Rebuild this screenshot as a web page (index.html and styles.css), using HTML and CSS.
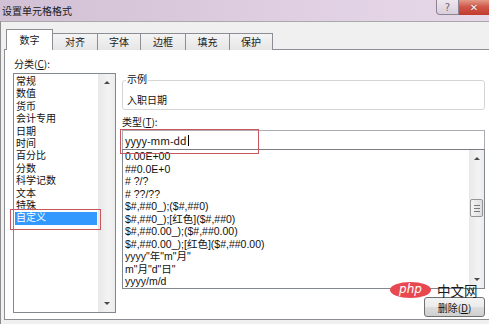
FILE: index.html
```html
<!DOCTYPE html>
<html lang="zh-CN">
<head>
<meta charset="utf-8">
<title>设置单元格格式</title>
<link rel="stylesheet" href="styles.css">
</head>
<body>
<div class="window">
  <div class="titlebar">
    <span class="title">设置单元格格式</span>
    <div class="caption">
      <span class="cap-btn help">?</span>
      <span class="cap-btn close">✕</span>
    </div>
  </div>
  <div class="client">
    <div class="tabs">
      <div class="tab active t1">数字</div>
      <div class="tab t2">对齐</div>
      <div class="tab t3">字体</div>
      <div class="tab t4">边框</div>
      <div class="tab t5">填充</div>
      <div class="tab t6">保护</div>
    </div>
    <div class="panel">
      <div class="left">
        <div class="label">分类(<u>C</u>):</div>
        <div class="listbox cat">
          <ul class="items">
            <li>常规</li>
            <li>数值</li>
            <li>货币</li>
            <li>会计专用</li>
            <li>日期</li>
            <li>时间</li>
            <li>百分比</li>
            <li>分数</li>
            <li>科学记数</li>
            <li>文本</li>
            <li>特殊</li>
            <li class="selected">自定义</li>
          </ul>
          <div class="scroll">
            <div class="arrow"><span class="tri up"></span></div>
            <div class="arrow"><span class="tri down"></span></div>
          </div>
        </div>
      </div>
      <div class="right">
        <fieldset class="sample">
          <legend>示例</legend>
          <div class="sample-text">入职日期</div>
        </fieldset>
        <div class="label type-label">类型(<u>T</u>):</div>
        <div class="input">yyyy-mm-dd<span class="caret"></span></div>
        <div class="listbox types">
          <ul class="items">
            <li>0.00E+00</li>
            <li>##0.0E+0</li>
            <li># ?/?</li>
            <li># ??/??</li>
            <li>$#,##0_);($#,##0)</li>
            <li>$#,##0_);[红色]($#,##0)</li>
            <li>$#,##0.00_);($#,##0.00)</li>
            <li>$#,##0.00_);[红色]($#,##0.00)</li>
            <li>yyyy"年"m"月"</li>
            <li>m"月"d"日"</li>
            <li>yyyy/m/d</li>
          </ul>
          <div class="scroll narrow">
            <div class="arrow"><span class="tri up"></span></div>
            <div class="track"><div class="thumb"><i></i><i></i><i></i></div></div>
            <div class="arrow"><span class="tri down"></span></div>
          </div>
        </div>
        <div class="actions">
          <button class="btn">删除(<u>D</u>)</button>
        </div>
      </div>
    </div>
  </div>
  <div class="mark mark-cat"></div>
  <div class="mark mark-input"></div>
  <div class="watermark"><span class="php">php</span><span class="cn">中文网</span></div>
</div>
</body>
</html>
```

FILE: styles.css
```css
* { box-sizing: border-box; margin: 0; padding: 0; }
html, body { width: 489px; height: 324px; overflow: hidden; }
body {
  font-family: "Noto Sans CJK SC", "Noto Sans", sans-serif;
  font-size: 10px;
  color: #111;
  background: #f0f0f0;
}
u { text-decoration: underline; }

.window { position: relative; width: 489px; height: 324px; display: flex; flex-direction: column; }

.titlebar {
  height: 21px;
  display: flex;
  justify-content: space-between;
  align-items: flex-start;
  background: linear-gradient(to right, #d2c1d5 0%, #d9c8dc 35%, #e0cfe3 60%, #e6d8e8 100%);
}
.title { padding-left: 2px; line-height: 21px; font-size: 10px; color: #1a1a1a; }
.caption { display: flex; }
.cap-btn { height: 15px; display: flex; align-items: center; justify-content: center; }
.help {
  width: 23px;
  border: 1px solid #8e8391;
  border-top: none;
  border-radius: 0 0 0 4px;
  background: linear-gradient(#eee6ef, #d9cfdc);
  color: #6a6a6a;
  font-family: "DejaVu Sans", sans-serif;
  font-size: 10px;
}
.close {
  width: 30px;
  background: linear-gradient(#e39a88 0%, #d0574a 45%, #c13a2e 100%);
  color: #fff;
  font-family: "DejaVu Sans", sans-serif;
  font-size: 10px;
  font-weight: bold;
  text-shadow: 0 0 1px #5a1a14;
}

.client {
  flex: 1;
  border-top: 1px solid #a9a9a9;
  border-left: 1px solid #8d8d8d;
  background: #f0f0f0;
  padding: 7px 0 0 3px;
}

.tabs {
  display: flex;
  align-items: flex-end;
  margin-left: 2px;
  height: 21px;
  margin-bottom: -1px;
  position: relative;
  z-index: 1;
}
.tab {
  height: 17px;
  border: 1px solid #8c8e94;
  border-bottom: none;
  background: linear-gradient(#f4f4f4, #e6e6e6);
  margin-left: -1px;
  text-align: center;
  line-height: 16px;
  color: #1a1a1a;
}
.tab.active {
  height: 21px;
  line-height: 20px;
  background: #fff;
  margin-left: 0;
  position: relative;
  z-index: 2;
}
.t1 { width: 47px; }
.t2 { width: 46px; }
.t3 { width: 44px; }
.t4 { width: 46px; }
.t5 { width: 45px; }
.t6 { width: 44px; }

.panel {
  height: 271px;
  border: 1px solid #8c8e94;
  border-right: none;
  background: #fff;
  display: flex;
  padding: 7px 0 0 8px;
}

.label { line-height: 13px; padding-left: 1px; }

.left { width: 103px; display: flex; flex-direction: column; }
.listbox {
  border: 1px solid #828790;
  background: #fff;
  display: flex;
}
.listbox.cat { margin-top: 3px; height: 240px; }
.items { list-style: none; flex: 1; font-family: "Liberation Sans", "Noto Sans CJK SC", sans-serif; }
.cat .items { padding-top: 2px; }
.cat .items li { line-height: 12.4px; height: 12.4px; margin-left: 1px; padding-left: 1px; margin-right: 1px; white-space: nowrap; }
.cat .items li.selected { background: #3399ff; color: #fff; }

.scroll {
  width: 17px;
  background: linear-gradient(to right, #e8e8e8, #f3f3f3 60%, #ececec);
  display: flex;
  flex-direction: column;
  justify-content: space-between;
}
.scroll.narrow { width: 15px; }
.arrow { height: 17px; display: flex; align-items: center; justify-content: center; }
.tri { width: 0; height: 0; border-left: 3px solid transparent; border-right: 3px solid transparent; }
.tri.up { border-bottom: 3px solid #4a4a4a; }
.tri.down { border-top: 3px solid #4a4a4a; }
.track { flex: 1; display: flex; flex-direction: column; align-items: center; }
.thumb {
  margin-top: 32px;
  width: 13px;
  height: 18px;
  border: 1px solid #959595;
  border-radius: 2px;
  background: linear-gradient(to right, #f4f4f4, #dedede);
  display: flex;
  flex-direction: column;
  align-items: center;
  justify-content: center;
  gap: 2px;
}
.thumb i { display: block; width: 6px; height: 1px; background: #7a7a7a; }

.right { width: 363px; margin-left: 6px; display: flex; flex-direction: column; }

.sample {
  margin-top: 15px;
  border: 1px solid #d5d5d5;
  border-radius: 3px;
  padding: 4px 3px 3px;
}
.sample legend { padding: 0 1px 4px; line-height: 13px; }
.sample-text { line-height: 13px; padding-left: 1px; }

.type-label { margin-top: 5px; padding-left: 0; }
.input {
  margin-top: 2px;
  height: 19px;
  border: 1px solid #abadb3;
  border-bottom: none;
  padding-left: 2px;
  line-height: 17px;
  font-size: 10.5px;
  display: flex;
  align-items: center;
}
.caret { display: inline-block; width: 1px; height: 11px; background: #000; margin-left: 1px; }

.listbox.types { height: 140px; border-top-color: #7a7d84; }
.types .items { padding-left: 2px; }
.types .items li { line-height: 12.5px; height: 12.5px; white-space: nowrap; font-size: 10.5px; }

.actions { display: flex; justify-content: flex-end; margin-top: 8px; }
.btn {
  width: 61px;
  height: 20px;
  border: 1px solid #707070;
  border-radius: 3px;
  background: linear-gradient(#f3f3f3 0%, #ebebeb 50%, #dddddd 51%, #cfcfcf 100%);
  font-family: "Noto Sans CJK SC", "Noto Sans", sans-serif;
  font-size: 10px;
  color: #111;
}

.mark { position: absolute; border: 1px solid #c85860; }
.mark-cat { left: 10px; top: 209px; width: 91px; height: 21px; }
.mark-input { left: 120px; top: 129px; width: 139px; height: 25px; }

.watermark { position: absolute; left: 390px; top: 282px; display: flex; align-items: center; gap: 6px; }
.php {
  width: 41px;
  height: 16px;
  border-radius: 50%;
  background: #e8484f;
  color: #fff;
  font-family: "DejaVu Sans", sans-serif;
  font-style: italic;
  font-size: 12px;
  line-height: 15px;
  text-align: center;
}
.cn { font-size: 13.5px; color: #1b1b1b; line-height: 16px; }
```
